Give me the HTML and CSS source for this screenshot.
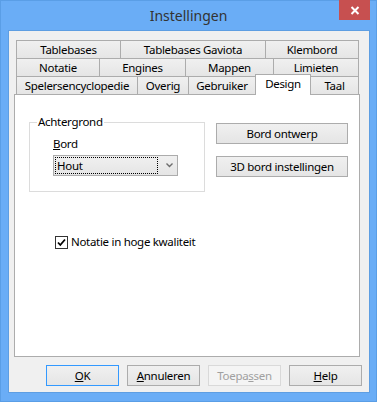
FILE: index.html
```html
<!DOCTYPE html>
<html lang="nl">
<head>
    <meta charset="UTF-8">
    <title>Instellingen</title>
    <link rel="stylesheet" href="styles.css">
</head>
<body>
    <div class="window">
        <div class="titlebar">
            <span class="title">Instellingen</span>
            <div class="close">
                <svg width="10" height="9" viewBox="0 0 10 9">
                    <path d="M1.5 1 L8.5 8 M8.5 1 L1.5 8" stroke="#fff" stroke-width="2"/>
                </svg>
            </div>
        </div>

        <div class="client">
            <div class="tabs">
                <div class="tab-row row-1">
                    <div class="tab">Tablebases</div>
                    <div class="tab">Tablebases Gaviota</div>
                    <div class="tab last">Klembord</div>
                </div>
                <div class="tab-row row-2">
                    <div class="tab">Notatie</div>
                    <div class="tab">Engines</div>
                    <div class="tab">Mappen</div>
                    <div class="tab last">Limieten</div>
                </div>
                <div class="tab-row row-3">
                    <div class="tab">Spelersencyclopedie</div>
                    <div class="tab">Overig</div>
                    <div class="tab">Gebruiker</div>
                    <div class="tab selected">Design</div>
                    <div class="tab last">Taal</div>
                </div>
            </div>

            <div class="panel">
                <div class="panel-top">
                    <fieldset class="group">
                        <legend>Achtergrond</legend>
                        <div class="field-label"><u>B</u>ord</div>
                        <div class="combo">
                            <span class="combo-value">Hout</span>
                            <svg class="chevron" width="7" height="5" viewBox="0 0 7 5">
                                <path d="M0.5 0.5 L3.5 3.5 L6.5 0.5" fill="none" stroke="#6d6d6d" stroke-width="1.4"/>
                            </svg>
                        </div>
                    </fieldset>
                    <div class="side-buttons">
                        <button class="btn wide">Bord ontwerp</button>
                        <button class="btn wide">3D bord instellingen</button>
                    </div>
                </div>
                <label class="check">
                    <span class="box">
                        <svg width="11" height="11" viewBox="0 0 11 11">
                            <path d="M2 5.5 L4.3 8 L9 2.5" fill="none" stroke="#000" stroke-width="1.8"/>
                        </svg>
                    </span>
                    Notatie in hoge kwaliteit
                </label>
            </div>

            <div class="footer">
                <button class="btn default"><u>O</u>K</button>
                <button class="btn"><u>A</u>nnuleren</button>
                <button class="btn disabled">Toepa<u>s</u>sen</button>
                <button class="btn"><u>H</u>elp</button>
            </div>
        </div>
    </div>
</body>
</html>
```

FILE: styles.css
```css
body {
    margin: 0;
    font-family: "Noto Sans", Arial, sans-serif;
    font-size: 11.5px;
    letter-spacing: -0.3px;
    color: #000;
}

.window {
    width: 377px;
    height: 402px;
    box-sizing: border-box;
    background-color: #6aadf6;  /* win8 light blue frame */
    border: 1px solid #5a9ee6;
    display: flex;
    flex-direction: column;
}

.titlebar {
    height: 29px;
    display: grid;
    grid-template-columns: 1fr auto 1fr;
}

.title {
    grid-column: 2;
    font-size: 14px;
    letter-spacing: 0;
    color: #333;
    line-height: 29px;
}

.close {
    grid-column: 3;
    justify-self: end;
    width: 31px;
    height: 20px;
    margin-right: 6px;
    margin-top: -1px;
    background-color: #c75050;
    display: flex;
    align-items: center;
    justify-content: center;
}

.client {
    flex: 1;
    margin: 0 6px 8px 7px;
    background-color: #f0f0f0;
    border: 1px solid #5e9ee2;
    display: flex;
    flex-direction: column;
}

/* tab strip */
.tabs {
    margin: 9px 11px 0 7px;
}

.tab-row {
    display: grid;
    height: 18px;
}

.row-1 { grid-template-columns: 104px 145px 94px; }
.row-2 { grid-template-columns: 83px 86px 88px 86px; }
.row-3 { grid-template-columns: 121px 51px 67px 55px 49px; }

.tab {
    border: 1px solid #acacac;
    border-right: none;
    border-bottom: none;
    background: linear-gradient(#f0f0f0, #e5e5e5);
    text-align: center;
    line-height: 17px;
    white-space: nowrap;
}

.tab.last {
    border-right: 1px solid #acacac;
}

.tab.selected {
    background: #fff;
    border-right: 1px solid #acacac;
    margin: -2px -1px -1px 0;
    position: relative;
    z-index: 1;
    line-height: 17px;
}

.panel {
    margin: 0 9px 0 5px;
    height: 263px;
    box-sizing: border-box;
    background-color: #fff;
    border: 1px solid #acacac;
}

.panel-top {
    display: flex;
    align-items: flex-start;
}

.group {
    margin: 19px 0 0 14px;
    padding: 6px 0 15px 23px;
    width: 176px;
    box-sizing: border-box;
    border: 1px solid #dcdcdc;
}

.group legend {
    padding: 0 1px;
    margin-left: -16px;
    line-height: 16px;
}

.field-label {
    line-height: 16px;
    margin-bottom: 3px;
}

.combo {
    width: 125px;
    height: 21px;
    box-sizing: border-box;
    border: 1px solid #acacac;
    background: linear-gradient(#f0f0f0, #e5e5e5);
    display: flex;
    align-items: center;
    padding: 1px;
}

.combo-value {
    width: 103px;
    height: 17px;
    box-sizing: border-box;
    border: 1px dotted #000;
    padding-left: 1px;
    line-height: 15px;
}

.chevron {
    margin-left: 8px;
}

.side-buttons {
    display: flex;
    flex-direction: column;
    gap: 12px;
    margin: 28px 0 0 11px;
}

.btn {
    width: 73px;
    height: 21px;
    padding: 0;
    font-family: inherit;
    font-size: 11.5px;
    letter-spacing: -0.3px;
    color: #000;
    border: 1px solid #acacac;
    background: linear-gradient(#f0f0f0, #e5e5e5);
    cursor: pointer;
}

.btn.wide {
    width: 132px;
}

.btn.default {
    border-color: #3399ff;
}

.btn.disabled {
    color: #a0a0a0;
    background: #f4f4f4;
    border-color: #d9d9d9;
}

.check {
    display: flex;
    align-items: center;
    gap: 3px;
    margin: 42px 0 0 40px;
    line-height: 16px;
}

.check .box {
    width: 13px;
    height: 13px;
    box-sizing: border-box;
    border: 1px solid #333;
    background: #fff;
    display: flex;
    align-items: center;
    justify-content: center;
}

.footer {
    display: flex;
    justify-content: flex-end;
    gap: 8px;
    margin-top: 8px;
    padding-right: 7px;
}
```
